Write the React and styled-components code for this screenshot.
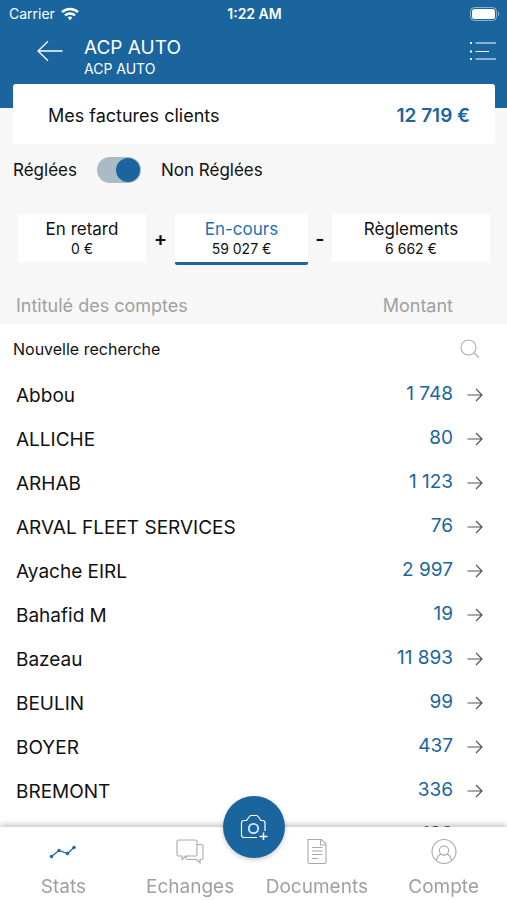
import { useState } from 'react';
import styled, { createGlobalStyle } from 'styled-components';

const accounts = [
    { name: 'Abbou', amount: '1 748' },
    { name: 'ALLICHE', amount: '80' },
    { name: 'ARHAB', amount: '1 123' },
    { name: 'ARVAL FLEET SERVICES', amount: '76' },
    { name: 'Ayache EIRL', amount: '2 997' },
    { name: 'Bahafid M', amount: '19' },
    { name: 'Bazeau', amount: '11 893' },
    { name: 'BEULIN', amount: '99' },
    { name: 'BOYER', amount: '437' },
    { name: 'BREMONT', amount: '336' },
    { name: '', amount: '188' },
];

const tabs = [
    { label: 'Stats', icon: <StatsIcon /> },
    { label: 'Echanges', icon: <ChatIcon /> },
    { label: 'Documents', icon: <DocumentIcon /> },
    { label: 'Compte', icon: <UserIcon /> },
];

export default function App() {
    const [unpaid, setUnpaid] = useState(true);
    const [active, setActive] = useState('En-cours');
    const [search, setSearch] = useState('');

    const rows = accounts.filter(({ name }) =>
        name.toLowerCase().includes(search.toLowerCase())
    );

    return (
        <>
        <GlobalStyle />
        <Screen>
            <Header>
                <StatusBar>
                    <Carrier>
                        Carrier
                        <WifiIcon />
                    </Carrier>
                    <Clock>1:22 AM</Clock>
                    <BatteryIcon />
                </StatusBar>
                <NavBar>
                    <NavButton aria-label="Retour">
                        <BackIcon />
                    </NavButton>
                    <Titles>
                        <Title>ACP AUTO</Title>
                        <Subtitle>ACP AUTO</Subtitle>
                    </Titles>
                    <NavButton aria-label="Menu">
                        <MenuIcon />
                    </NavButton>
                </NavBar>
            </Header>
            <TotalCard>
                <span>Mes factures clients</span>
                <Total>12 719 €</Total>
            </TotalCard>
            <SwitchRow>
                <label htmlFor="unpaid">Réglées</label>
                <Switch
                    id="unpaid"
                    type="checkbox"
                    role="switch"
                    checked={unpaid}
                    onChange={(e) => setUnpaid(e.target.checked)}
                />
                <label htmlFor="unpaid">Non Réglées</label>
            </SwitchRow>
            <Filters>
                <Filter $grow={128} $active={active === 'En retard'} onClick={() => setActive('En retard')}>
                    <FilterLabel>En retard</FilterLabel>
                    <FilterValue>0 €</FilterValue>
                </Filter>
                <Operator $width={29}>+</Operator>
                <Filter $grow={133} $active={active === 'En-cours'} onClick={() => setActive('En-cours')}>
                    <FilterLabel>En-cours</FilterLabel>
                    <FilterValue>59 027 €</FilterValue>
                </Filter>
                <Operator $width={24}>-</Operator>
                <Filter $grow={158} $active={active === 'Règlements'} onClick={() => setActive('Règlements')}>
                    <FilterLabel>Règlements</FilterLabel>
                    <FilterValue>6 662 €</FilterValue>
                </Filter>
            </Filters>
            <ListArea>
                <Table>
                    <thead>
                        <HeadRow>
                            <HeadCell>Intitulé des comptes</HeadCell>
                            <HeadCell $right>Montant</HeadCell>
                            <HeadCell as="td" />
                        </HeadRow>
                        <tr>
                            <SearchCell colSpan="3">
                                <SearchBox>
                                    <SearchInput
                                        type="text"
                                        aria-label="Nouvelle recherche"
                                        placeholder="Nouvelle recherche"
                                        value={search}
                                        onChange={(e) => setSearch(e.target.value)}
                                    />
                                    <SearchIcon />
                                </SearchBox>
                            </SearchCell>
                        </tr>
                    </thead>
                    <tbody>
                        {rows.map(({ name, amount }) => (
                            <tr key={amount}>
                                <NameCell>{name}</NameCell>
                                <AmountCell>{amount}</AmountCell>
                                <ArrowCell>
                                    <IconButton aria-label={`Ouvrir ${name}`}>
                                        <ArrowIcon />
                                    </IconButton>
                                </ArrowCell>
                            </tr>
                        ))}
                    </tbody>
                </Table>
            </ListArea>
            <TabBar>
                {tabs.map(({ label, icon }) => (
                    <Tab href="#" key={label}>
                        {icon}
                        {label}
                    </Tab>
                ))}
                <CameraButton aria-label="Ajouter une photo">
                    <CameraIcon />
                </CameraButton>
            </TabBar>
        </Screen>
        </>
    );
}

function WifiIcon() {
    return (
        <svg width="18" height="14" viewBox="0 0 18 14" fill="none" stroke="#fff" strokeWidth="2.5">
            <path d="M1 5.2C5.4.9 12.6.9 17 5.2" />
            <path d="M4 8.4c2.8-2.7 7.2-2.7 10 0" />
            <path d="M6.6 10.5c1.4-1.2 3.4-1.2 4.8 0L9 13.2z" fill="#fff" stroke="none" />
        </svg>
    );
}

function BatteryIcon() {
    return (
        <svg width="30" height="14" viewBox="0 0 30 14">
            <rect x="0.5" y="0.5" width="26" height="13" rx="4" fill="none" stroke="#fff" strokeOpacity="0.5" />
            <rect x="2" y="2" width="23" height="10" rx="2.5" fill="#fff" />
            <path d="M28 4.8c1.6.6 1.6 3.8 0 4.4z" fill="#fff" fillOpacity="0.5" />
        </svg>
    );
}

function BackIcon() {
    return (
        <svg width="26" height="22" viewBox="0 0 26 22" fill="none" stroke="#fff" strokeWidth="1.3">
            <path d="M25.5 11H1M11 1.2L1 11l10 9.8" />
        </svg>
    );
}

function MenuIcon() {
    return (
        <svg width="28" height="20" viewBox="0 0 28 20" fill="none" stroke="#fff" strokeWidth="1.2">
            <path d="M6.5 2H27M6.5 10.5H20M6.5 18H27" />
            <path d="M1 2h2M1 10.5h2M1 18h2" strokeWidth="2" />
        </svg>
    );
}

function SearchIcon() {
    return (
        <svg width="20" height="20" viewBox="0 0 20 20" fill="none" stroke="#b0b0b0" strokeWidth="1.1">
            <circle cx="8.5" cy="8.5" r="7.5" />
            <path d="M14 14l5 4.5" />
        </svg>
    );
}

function ArrowIcon() {
    return (
        <svg width="16" height="14" viewBox="0 0 16 14" fill="none" stroke="#555" strokeWidth="1.2">
            <path d="M.5 7H15M9 1l6 6-6 6" />
        </svg>
    );
}

function StatsIcon() {
    return (
        <svg width="28" height="28" viewBox="0 0 28 28" fill="#1a659e" stroke="#1a659e">
            <path d="M2.5 18.5L10 12.5l8.5 3L25 9.5" fill="none" strokeWidth="1.2" />
            <circle cx="2.5" cy="18.5" r="1.3" />
            <circle cx="10" cy="12.5" r="1.3" />
            <circle cx="18.5" cy="15.5" r="1.3" />
            <circle cx="25" cy="9.5" r="1.3" />
        </svg>
    );
}

function ChatIcon() {
    return (
        <svg width="28" height="28" viewBox="0 0 28 28" fill="none" stroke="#a9a9a9" strokeWidth="1.1">
            <path d="M2.5 2h17q1.5 0 1.5 1.5v13q0 1.5-1.5 1.5H9.5L6 21.5V18H2.5Q1 18 1 16.5v-13Q1 2 2.5 2z" />
            <path d="M21 6.5h4.5Q27 6.5 27 8v12q0 1.5-1.5 1.5H24V25l-3.5-3.5H12q-1.5 0-2.5-1.5L11 18" />
        </svg>
    );
}

function DocumentIcon() {
    return (
        <svg width="28" height="28" viewBox="0 0 28 28" fill="none" stroke="#a9a9a9" strokeWidth="1.1">
            <path d="M5 1.5h13.5L23 6v18q0 1.5-1.5 1.5h-15Q5 25.5 5 24V1.5z" />
            <path d="M17.5 1.5V7H23" />
            <path d="M9 9.5h10.5M9 13h10.5M9 16.5h10.5M9 20.5h6" />
        </svg>
    );
}

function UserIcon() {
    return (
        <svg width="28" height="28" viewBox="0 0 28 28" fill="none" stroke="#a9a9a9" strokeWidth="1.1">
            <circle cx="14" cy="13.5" r="12" />
            <circle cx="14" cy="12.5" r="4.6" />
            <path d="M6.5 22.5c.5-3.5 2-5.5 4.5-6.5M21.5 22.5c-.5-3.5-2-5.5-4.5-6.5" />
        </svg>
    );
}

function CameraIcon() {
    return (
        <svg width="28" height="26" viewBox="0 0 28 26" fill="none" stroke="#fff" strokeWidth="1.2">
            <path d="M17 23.5H4q-2.5 0-2.5-2.5V9Q1.5 6.5 4 6.5h2.5L9 3q1-1.5 2-1.5h5.5Q17.5 1.5 18.5 3L21 6.5h1.5Q25 6.5 25 9v8" />
            <circle cx="13.5" cy="14.5" r="4.7" strokeWidth="1.8" strokeOpacity="0.85" />
            <path d="M23.5 18.5v7.5M19.5 22.5h8" strokeWidth="1.5" />
        </svg>
    );
}

const GlobalStyle = createGlobalStyle`
    * {
        box-sizing: border-box;
    }

    body {
        margin: 0;
        background: #fff;
        color: #111;
        font-family: Inter, "Liberation Sans", sans-serif;
    }

    svg {
        display: block;
        flex: none;
    }

    button, input {
        font: inherit;
        color: inherit;
    }
`;

const Screen = styled.div`
    display: flex;
    flex-direction: column;
    height: 100vh;
    background: #f7f7f7;
`;

const Header = styled.header`
    flex: none;
    padding-bottom: 28px;
    background: #1a659e;
    color: #fff;
`;

const StatusBar = styled.div`
    display: grid;
    grid-template-columns: 1fr auto 1fr;
    align-items: center;
    height: 27px;
    padding: 0 7px 0 9px;
    font-size: 14px;

    > svg {
        justify-self: end;
    }
`;

const Carrier = styled.span`
    display: flex;
    align-items: center;
    gap: 6px;
`;

const Clock = styled.span`
    font-weight: 600;
`;

const NavBar = styled.div`
    display: flex;
    align-items: flex-start;
    height: 53px;
    padding: 9px 10px 0 37px;
`;

const IconButton = styled.button`
    display: flex;
    align-items: center;
    padding: 0;
    border: 0;
    background: none;
    cursor: pointer;
`;

const NavButton = styled(IconButton)`
    height: 30px;
`;

const Titles = styled.div`
    flex: 1;
    padding-left: 21px;
`;

const Title = styled.h1`
    margin: 0;
    font-size: 19px;
    font-weight: 400;
    line-height: 24px;
`;

const Subtitle = styled.p`
    margin: 0;
    font-size: 14px;
    line-height: 18px;
`;

const TotalCard = styled.section`
    display: flex;
    flex: none;
    align-items: center;
    justify-content: space-between;
    height: 60px;
    margin: -24px 12px 0 13px;
    padding: 2px 25px 0 35px;
    border-radius: 3px;
    background: #fff;
    font-size: 18px;
`;

const Total = styled.strong`
    color: #1a659e;
    font-size: 19px;
    font-weight: 600;
`;

const SwitchRow = styled.div`
    display: flex;
    flex: none;
    align-items: center;
    gap: 20px;
    padding: 13px 13px 0;
    font-size: 17px;
`;

const Switch = styled.input`
    appearance: none;
    width: 44px;
    height: 26px;
    margin: 0;
    padding: 1px;
    border-radius: 13px;
    background: #a9bcc6;
    cursor: pointer;

    &::before {
        content: '';
        display: block;
        width: 24px;
        height: 24px;
        border-radius: 50%;
        background: #fff;
    }

    &:checked::before {
        margin-left: auto;
        background: #1a659e;
    }
`;

const Filters = styled.div`
    display: flex;
    flex: none;
    align-items: flex-start;
    height: 72px;
    margin-top: 31px;
    padding: 0 17px 0 18px;
`;

const Filter = styled.button`
    flex: ${({ $grow }) => $grow} 1 0;
    height: ${({ $active }) => ($active ? '51px' : '48px')};
    padding: 0;
    border: 0;
    border-bottom: ${({ $active }) => ($active ? '3px solid #1a659e' : '0')};
    border-radius: 2px;
    background: #fff;
    cursor: pointer;

    > span:first-child {
        color: ${({ $active }) => ($active ? '#1a72b0' : 'inherit')};
    }
`;

const FilterLabel = styled.span`
    display: block;
    font-size: 17px;
    line-height: 22px;
`;

const FilterValue = styled.span`
    display: block;
    font-size: 14px;
    line-height: 18px;
`;

const Operator = styled.span`
    width: ${({ $width }) => $width}px;
    font-size: 20px;
    font-weight: 600;
    line-height: 50px;
    text-align: center;
`;

const ListArea = styled.main`
    flex: 1;
    min-height: 0;
    overflow-y: auto;
    scrollbar-width: none;
    background: #fff;
`;

const Table = styled.table`
    width: 100%;
    border-collapse: collapse;
`;

const HeadRow = styled.tr`
    background: #f7f7f7;
`;

const HeadCell = styled.th`
    height: 38px;
    padding: 0 0 0 16px;
    color: #a0a0a0;
    font-size: 18px;
    font-weight: 400;
    text-align: ${({ $right }) => ($right ? 'right' : 'left')};
`;

const SearchCell = styled.td`
    height: 49px;
    padding: 0 27px 0 13px;
`;

const SearchBox = styled.div`
    display: flex;
    align-items: center;
`;

const SearchInput = styled.input`
    flex: 1;
    min-width: 0;
    padding: 0;
    border: 0;
    outline: 0;
    background: none;
    font-size: 16px;

    &::placeholder {
        color: #111;
        opacity: 1;
    }
`;

const NameCell = styled.td`
    height: 44px;
    padding: 0 0 0 16px;
    font-size: 19px;
`;

const AmountCell = styled.td`
    padding: 0 0 4px;
    color: #1a659e;
    font-size: 19px;
    text-align: right;
    white-space: nowrap;
`;

const ArrowCell = styled.td`
    width: 54px;
    padding: 0 0 0 14px;
`;

const TabBar = styled.nav`
    position: relative;
    display: flex;
    flex: none;
    height: 73px;
    background: #fff;
    box-shadow: 0 -2px 6px rgba(0, 0, 0, 0.25);
`;

const Tab = styled.a`
    display: flex;
    flex: 1 1 0;
    flex-direction: column;
    align-items: center;
    gap: 10px;
    padding-top: 11px;
    color: #a0a0a0;
    font-size: 19px;
    line-height: 22px;
    text-decoration: none;
`;

const CameraButton = styled.button`
    position: absolute;
    top: -31px;
    left: 50%;
    display: flex;
    align-items: center;
    justify-content: center;
    width: 62px;
    height: 62px;
    margin-left: -31px;
    padding: 0;
    border: 0;
    border-radius: 50%;
    background: #1a659e;
    box-shadow: 0 2px 5px rgba(0, 0, 0, 0.2);
    cursor: pointer;
`;
